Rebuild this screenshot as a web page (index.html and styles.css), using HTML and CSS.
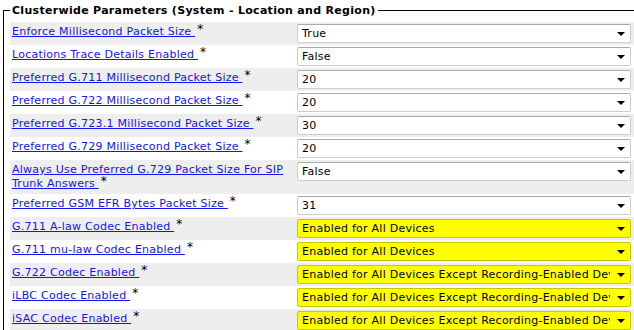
FILE: index.html
```html
<!doctype html>
<html lang="en">
  <head>
    <meta charset="UTF-8" />
    <title>Service Parameter Configuration</title>
    <link rel="stylesheet" href="styles.css">
  </head>
  <body>
    <fieldset class="group">
      <legend>Clusterwide Parameters (System - Location and Region)</legend>
      <div class="params">
        <div class="row">
          <div class="label"><a href="#">Enforce Millisecond Packet Size </a><sup>*</sup></div>
          <div class="field"><select><option>True</option></select></div>
        </div>
        <div class="row">
          <div class="label"><a href="#">Locations Trace Details Enabled </a><sup>*</sup></div>
          <div class="field"><select><option>False</option></select></div>
        </div>
        <div class="row">
          <div class="label"><a href="#">Preferred G.711 Millisecond Packet Size </a><sup>*</sup></div>
          <div class="field"><select><option>20</option></select></div>
        </div>
        <div class="row">
          <div class="label"><a href="#">Preferred G.722 Millisecond Packet Size </a><sup>*</sup></div>
          <div class="field"><select><option>20</option></select></div>
        </div>
        <div class="row">
          <div class="label"><a href="#">Preferred G.723.1 Millisecond Packet Size </a><sup>*</sup></div>
          <div class="field"><select><option>30</option></select></div>
        </div>
        <div class="row">
          <div class="label"><a href="#">Preferred G.729 Millisecond Packet Size </a><sup>*</sup></div>
          <div class="field"><select><option>20</option></select></div>
        </div>
        <div class="row">
          <div class="label"><a href="#">Always Use Preferred G.729 Packet Size For SIP Trunk Answers </a><sup>*</sup></div>
          <div class="field"><select><option>False</option></select></div>
        </div>
        <div class="row">
          <div class="label"><a href="#">Preferred GSM EFR Bytes Packet Size </a><sup>*</sup></div>
          <div class="field"><select><option>31</option></select></div>
        </div>
        <div class="row">
          <div class="label"><a href="#">G.711 A-law Codec Enabled </a><sup>*</sup></div>
          <div class="field changed"><select><option>Enabled for All Devices</option></select></div>
        </div>
        <div class="row">
          <div class="label"><a href="#">G.711 mu-law Codec Enabled </a><sup>*</sup></div>
          <div class="field changed"><select><option>Enabled for All Devices</option></select></div>
        </div>
        <div class="row">
          <div class="label"><a href="#">G.722 Codec Enabled </a><sup>*</sup></div>
          <div class="field changed"><select><option>Enabled for All Devices Except Recording-Enabled Devices</option></select></div>
        </div>
        <div class="row">
          <div class="label"><a href="#">iLBC Codec Enabled </a><sup>*</sup></div>
          <div class="field changed"><select><option>Enabled for All Devices Except Recording-Enabled Devices</option></select></div>
        </div>
        <div class="row">
          <div class="label"><a href="#">iSAC Codec Enabled </a><sup>*</sup></div>
          <div class="field changed"><select><option>Enabled for All Devices Except Recording-Enabled Devices</option></select></div>
        </div>
      </div>
    </fieldset>
  </body>
</html>
```

FILE: styles.css
```css
html,
body {
  margin: 0;
  padding: 0;
  overflow: hidden;
  background-color: #fff;
  font-family: "DejaVu Sans", Verdana, sans-serif;
  font-size: 11px;
  color: #000;
}
.group {
  width: 660px;
  margin: 0 0 0 3px;
  padding: 1px 0 0 6px;
  border: 1px solid #000;
}
.group legend {
  padding: 0 2px;
  font-size: 11px;
  font-weight: bold;
  letter-spacing: 0.3px;
  line-height: 21px;
}
.row {
  display: flex;
  align-items: flex-start;
}
.row:nth-child(odd) {
  background-color: #eee;
}
.label {
  width: 285px;
  padding: 3px 0 3px 2px;
  line-height: 14px;
  letter-spacing: 0.25px;
}
.label a {
  color: #1414f0;
  text-decoration: underline;
}
.label sup {
  font-size: 12px;
  vertical-align: top;
  line-height: 8px;
  margin-left: 2px;
}
.field {
  position: relative;
  width: 334px;
  padding: 2px 0;
}
.field select {
  appearance: none;
  width: 100%;
  height: 19px;
  margin: 0;
  padding: 0 20px 0 4px;
  font-family: inherit;
  font-size: 11px;
  letter-spacing: 0.25px;
  color: #000;
  background-color: #fff;
  border: 1px solid #ccc;
  border-top-color: #aaa;
  border-radius: 2px;
  outline: none;
}
.field::after {
  content: "";
  position: absolute;
  right: 6px;
  top: 10px;
  border-left: 4px solid transparent;
  border-right: 4px solid transparent;
  border-top: 4px solid #000;
}
.field.changed select {
  background-color: #ff0;
  border-color: #c8c800;
}
```
